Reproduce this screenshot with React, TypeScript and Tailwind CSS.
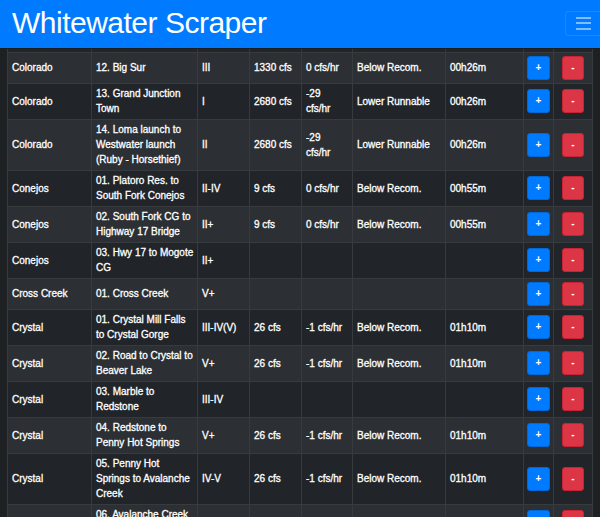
import React from 'react';

interface RunRow {
  river: string;
  name: string[];
  grade: string;
  flow: string;
  trend: string[];
  status: string;
  age: string;
}

const runs: RunRow[] = [
  { river: 'Colorado', name: ['12. Big Sur'], grade: 'III', flow: '1330 cfs', trend: ['0 cfs/hr'], status: 'Below Recom.', age: '00h26m' },
  { river: 'Colorado', name: ['13. Grand Junction', 'Town'], grade: 'I', flow: '2680 cfs', trend: ['-29', 'cfs/hr'], status: 'Lower Runnable', age: '00h26m' },
  { river: 'Colorado', name: ['14. Loma launch to', 'Westwater launch', '(Ruby - Horsethief)'], grade: 'II', flow: '2680 cfs', trend: ['-29', 'cfs/hr'], status: 'Lower Runnable', age: '00h26m' },
  { river: 'Conejos', name: ['01. Platoro Res. to', 'South Fork Conejos'], grade: 'II-IV', flow: '9 cfs', trend: ['0 cfs/hr'], status: 'Below Recom.', age: '00h55m' },
  { river: 'Conejos', name: ['02. South Fork CG to', 'Highway 17 Bridge'], grade: 'II+', flow: '9 cfs', trend: ['0 cfs/hr'], status: 'Below Recom.', age: '00h55m' },
  { river: 'Conejos', name: ['03. Hwy 17 to Mogote', 'CG'], grade: 'II+', flow: '', trend: [], status: '', age: '' },
  { river: 'Cross Creek', name: ['01. Cross Creek'], grade: 'V+', flow: '', trend: [], status: '', age: '' },
  { river: 'Crystal', name: ['01. Crystal Mill Falls', 'to Crystal Gorge'], grade: 'III-IV(V)', flow: '26 cfs', trend: ['-1 cfs/hr'], status: 'Below Recom.', age: '01h10m' },
  { river: 'Crystal', name: ['02. Road to Crystal to', 'Beaver Lake'], grade: 'V+', flow: '26 cfs', trend: ['-1 cfs/hr'], status: 'Below Recom.', age: '01h10m' },
  { river: 'Crystal', name: ['03. Marble to', 'Redstone'], grade: 'III-IV', flow: '', trend: [], status: '', age: '' },
  { river: 'Crystal', name: ['04. Redstone to', 'Penny Hot Springs'], grade: 'V+', flow: '26 cfs', trend: ['-1 cfs/hr'], status: 'Below Recom.', age: '01h10m' },
  { river: 'Crystal', name: ['05. Penny Hot', 'Springs to Avalanche', 'Creek'], grade: 'IV-V', flow: '26 cfs', trend: ['-1 cfs/hr'], status: 'Below Recom.', age: '01h10m' },
  { river: 'Crystal', name: ['06. Avalanche Creek', 'to Carbondale'], grade: 'IV', flow: '26 cfs', trend: ['-1 cfs/hr'], status: 'Below Recom.', age: '01h10m' },
];

const Lines: React.FC<{ lines: string[] }> = ({ lines }) => (
  <>
    {lines.map((l, i) => (
      <React.Fragment key={i}>
        {i > 0 && <br />}
        {l}
      </React.Fragment>
    ))}
  </>
);

const cell = 'border border-[#373b3e] pl-[4px] pr-[2px] py-[2.5px] align-middle whitespace-nowrap';

const App: React.FC = () => {
  return (
    <div className="min-h-screen bg-[#1e2124] font-['Liberation_Sans',Arial,sans-serif] text-white">
      {/* Navbar */}
      <nav className="h-[49px] bg-[#007bff] border-b border-[#1b1e21] flex items-center justify-between pl-[12px]">
        <span className="text-[30px] leading-[30px] tracking-[-0.5px] mb-[2px]">Whitewater Scraper</span>
        <button className="w-[35px] h-[25px] mb-[2px] rounded-l-[4px] border border-r-0 border-white/10 flex flex-col justify-center gap-[3.5px] pl-[10px]">
          <span className="block w-[15px] h-[2px] bg-white/50" />
          <span className="block w-[15px] h-[2px] bg-white/50" />
          <span className="block w-[15px] h-[2px] bg-white/50" />
        </button>
      </nav>

      {/* Runs table */}
      <div className="pl-[7px]">
        <table className="table-fixed w-[585px] border-collapse text-[10px] leading-[15px] [-webkit-text-stroke:0.3px_white]">
          <colgroup>
            <col className="w-[84px]" />
            <col className="w-[106px]" />
            <col className="w-[52px]" />
            <col className="w-[52px]" />
            <col className="w-[51px]" />
            <col className="w-[93px]" />
            <col className="w-[78px]" />
            <col className="w-[30px]" />
            <col className="w-[39px]" />
          </colgroup>
          <tbody>
            <tr className="h-[3px] bg-[#212529]">
              {Array.from({ length: 9 }).map((_, i) => (
                <td key={i} className="border-x border-[#373b3e] p-0" />
              ))}
            </tr>
            {runs.map((r, i) => (
              <tr key={i} className={i % 2 === 0 ? 'bg-[#2c3034]' : 'bg-[#212529]'}>
                <td className={cell}>{r.river}</td>
                <td className={cell}><Lines lines={r.name} /></td>
                <td className={cell}>{r.grade}</td>
                <td className={cell}>{r.flow}</td>
                <td className={cell}><Lines lines={r.trend} /></td>
                <td className={cell}>{r.status}</td>
                <td className={cell}>{r.age}</td>
                <td className="border border-[#373b3e] p-0 py-[3px] text-center align-middle">
                  <button className="h-[24px] px-[8px] rounded-[3px] bg-[#007bff] border border-[#0069d9] text-white text-[10px] font-bold leading-none [-webkit-text-stroke:0px]">+</button>
                </td>
                <td className="border border-[#373b3e] p-0 py-[3px] text-center align-middle">
                  <button className="h-[24px] px-[8px] rounded-[3px] bg-[#dc3545] border border-[#c82333] text-white text-[10px] font-bold leading-none [-webkit-text-stroke:0px]">-</button>
                </td>
              </tr>
            ))}
          </tbody>
        </table>
      </div>
    </div>
  );
};

export default App;
